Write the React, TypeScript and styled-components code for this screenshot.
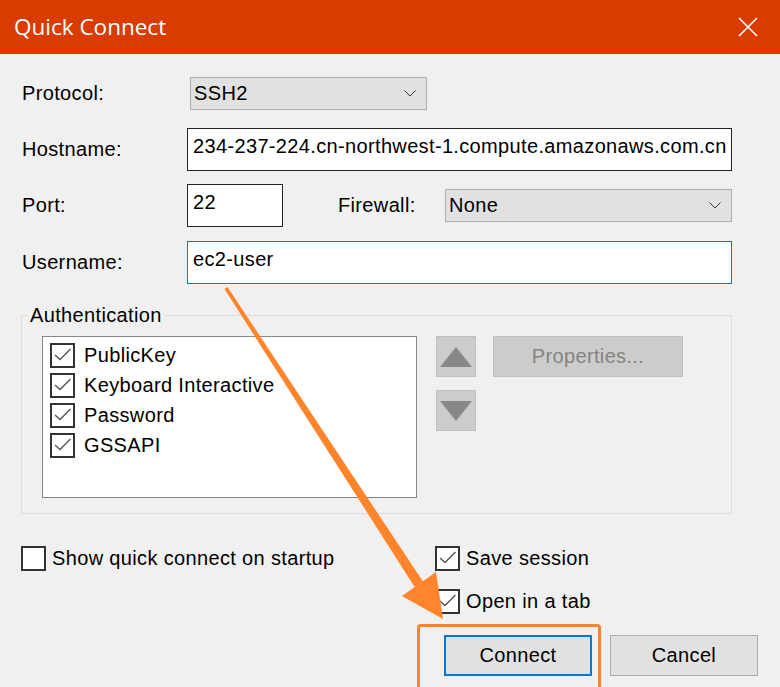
import React from 'react';
import styled, { createGlobalStyle } from 'styled-components';

const GlobalStyle = createGlobalStyle`
    html, body {
        margin: 0;
        padding: 0;
        background: #f0f0f0;
    }
    body {
        font-family: "Liberation Sans", Arial, sans-serif;
        font-size: 20px;
        letter-spacing: 0.35px;
        color: #000;
    }
`;

const Window = styled.div`
    position: relative;
    width: 780px;
    height: 687px;
    background: #f0f0f0;
    overflow: hidden;
`;

const TitleBar = styled.div`
    height: 54px;
    background: #da3b01;
    display: flex;
    align-items: center;
    justify-content: space-between;
    padding: 0 22px 0 14px;
`;

const Title = styled.div`
    font-family: "Open Sans", "Noto Sans", sans-serif;
    font-size: 22.5px;
    letter-spacing: 0;
    color: #fff;
    margin-top: -1px;
`;

const Body = styled.div`
    padding: 0 22px 0 21px;
`;

const Form = styled.div`
    margin-right: 26px;
    display: flex;
    flex-direction: column;
`;

const Row = styled.div<{ $top: number; $h: number }>`
    display: flex;
    align-items: center;
    margin-top: ${(p) => p.$top}px;
    height: ${(p) => p.$h}px;
`;

const Label = styled.div<{ $w: number; $gap?: number }>`
    width: ${(p) => p.$w}px;
    margin-left: ${(p) => p.$gap ?? 0}px;
    flex: none;
    padding-left: 1px;
`;

const Combo = styled.div<{ $w?: number }>`
    box-sizing: border-box;
    height: 33px;
    ${(p) => (p.$w ? `width: ${p.$w}px;` : 'flex: 1;')}
    background: #e1e1e1;
    border: 1px solid #adadad;
    display: flex;
    align-items: center;
    justify-content: space-between;
    padding: 0 10px 0 3px;
`;

const TextBox = styled.div<{ $w?: number; $focus?: boolean }>`
    box-sizing: border-box;
    height: 43px;
    ${(p) => (p.$w ? `width: ${p.$w}px;` : 'flex: 1;')}
    background: #fff;
    border: 1px solid ${(p) => (p.$focus ? '#0078d7' : '#222')};
    padding: 5px 5px 0 5px;
    line-height: 24px;
    white-space: nowrap;
    overflow: hidden;
`;

const Group = styled.fieldset`
    margin: 19px 26px 0 0;
    padding: 0 0 15px 0;
    border: 1px solid #dcdcdc;
    display: flex;
    align-items: flex-start;
    min-width: 0;
`;

const Legend = styled.legend`
    margin-left: 6px;
    padding: 0 2px;
    line-height: 24px;
`;

const ListBox = styled.div`
    box-sizing: border-box;
    width: 375px;
    height: 162px;
    margin: 9px 0 0 20px;
    background: #fff;
    border: 1px solid #828790;
    padding: 3px 0 0 7px;
`;

const ListItem = styled.div`
    display: flex;
    align-items: center;
    gap: 9px;
    height: 30px;
`;

const Arrows = styled.div`
    display: flex;
    flex-direction: column;
    gap: 13px;
    margin: 9px 0 0 19px;
`;

const ArrowButton = styled.div`
    box-sizing: border-box;
    width: 40px;
    height: 41px;
    background: #cccccc;
    border: 1px solid #bfbfbf;
    display: flex;
    align-items: center;
    justify-content: center;
`;

const PropsButton = styled.div`
    box-sizing: border-box;
    width: 190px;
    height: 41px;
    margin: 9px 0 0 17px;
    background: #cccccc;
    border: 1px solid #bfbfbf;
    color: #838383;
    display: flex;
    align-items: center;
    justify-content: center;
`;

const Options = styled.div`
    display: grid;
    grid-template-columns: 414px 1fr;
    row-gap: 18px;
    margin-top: 32px;
`;

const Check = styled.label`
    display: flex;
    align-items: center;
    gap: 6px;
    height: 25px;
`;

const Box = styled.span`
    box-sizing: border-box;
    width: 25px;
    height: 25px;
    flex: none;
    background: #fff;
    border: 2px solid #333;
    display: flex;
    align-items: center;
    justify-content: center;
`;

const Buttons = styled.div`
    display: flex;
    justify-content: flex-end;
    gap: 18px;
    margin-top: 21px;
`;

const Button = styled.div<{ $primary?: boolean }>`
    box-sizing: border-box;
    width: 148px;
    height: 41px;
    background: #e1e1e1;
    border: ${(p) => (p.$primary ? '2px solid #0078d7' : '1px solid #adadad')};
    display: flex;
    align-items: center;
    justify-content: center;
`;

const Overlay = styled.svg`
    position: absolute;
    left: 0;
    top: 0;
    pointer-events: none;
`;

const Chevron = () => (
    <svg width="12" height="7" viewBox="0 0 12 7">
        <polyline points="0.5,0.5 6,6 11.5,0.5" fill="none" stroke="#333" strokeWidth="1" />
    </svg>
);

const CheckBox = ({ checked }: { checked?: boolean }) => (
    <Box>
        {checked && (
            <svg width="21" height="21" viewBox="0 0 21 21">
                <polyline points="3,10 8,14.5 18.5,4" fill="none" stroke="#555" strokeWidth="1.4" />
            </svg>
        )}
    </Box>
);

const methods = ['PublicKey', 'Keyboard Interactive', 'Password', 'GSSAPI'];

export default function App() {
    return (
        <Window>
            <GlobalStyle />
            <TitleBar>
                <Title>Quick Connect</Title>
                <svg width="20" height="20" viewBox="0 0 20 20">
                    <path d="M1 1 L19 19 M19 1 L1 19" stroke="#fff" strokeWidth="1.6" />
                </svg>
            </TitleBar>
            <Body>
                <Form>
                    <Row $top={23} $h={33}>
                        <Label $w={168}>Protocol:</Label>
                        <Combo $w={237}>
                            SSH2
                            <Chevron />
                        </Combo>
                    </Row>
                    <Row $top={18} $h={43}>
                        <Label $w={165}>Hostname:</Label>
                        <TextBox>234-237-224.cn-northwest-1.compute.amazonaws.com.cn</TextBox>
                    </Row>
                    <Row $top={13} $h={43}>
                        <Label $w={165}>Port:</Label>
                        <TextBox $w={96}>22</TextBox>
                        <Label $w={107} $gap={54}>Firewall:</Label>
                        <Combo>
                            None
                            <Chevron />
                        </Combo>
                    </Row>
                    <Row $top={14} $h={43}>
                        <Label $w={165}>Username:</Label>
                        <TextBox $focus>ec2-user</TextBox>
                    </Row>
                </Form>
                <Group>
                    <Legend>Authentication</Legend>
                    <ListBox>
                        {methods.map((m) => (
                            <ListItem key={m}>
                                <CheckBox checked />
                                {m}
                            </ListItem>
                        ))}
                    </ListBox>
                    <Arrows>
                        <ArrowButton>
                            <svg width="32" height="20" viewBox="0 0 32 20">
                                <polygon points="0,20 16,0 32,20" fill="#888" />
                            </svg>
                        </ArrowButton>
                        <ArrowButton>
                            <svg width="32" height="20" viewBox="0 0 32 20">
                                <polygon points="0,0 32,0 16,20" fill="#888" />
                            </svg>
                        </ArrowButton>
                    </Arrows>
                    <PropsButton>Properties...</PropsButton>
                </Group>
                <Options>
                    <Check>
                        <CheckBox />
                        Show quick connect on startup
                    </Check>
                    <Check>
                        <CheckBox checked />
                        Save session
                    </Check>
                    <span />
                    <Check>
                        <CheckBox checked />
                        Open in a tab
                    </Check>
                </Options>
                <Buttons>
                    <Button $primary>Connect</Button>
                    <Button>Cancel</Button>
                </Buttons>
            </Body>
            <Overlay width="780" height="687" viewBox="0 0 780 687">
                <polygon points="224.5,289 227.5,287 423.2,581.8 414.8,587.2" fill="#ff842b" />
                <polygon points="402,596 436,572 443,619" fill="#ff842b" />
                <rect x="418.5" y="625.5" width="181" height="70" rx="2" fill="none" stroke="#ff842b" strokeWidth="3" />
            </Overlay>
        </Window>
    );
}
